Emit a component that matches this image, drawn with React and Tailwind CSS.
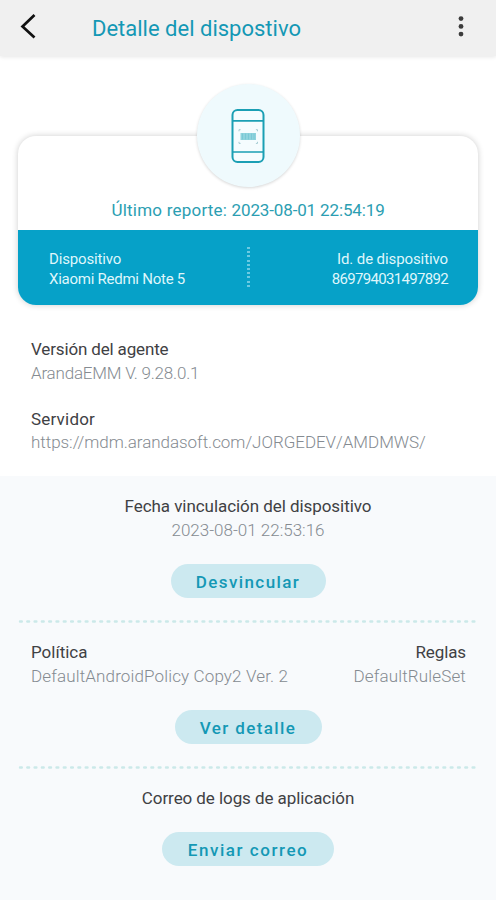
import { clsx } from "clsx";

function BackIcon() {
  return (
    <svg width="18" height="28" viewBox="0 0 18 28" fill="none">
      <path d="M15.5 1 3.5 12.4 15.5 23.6" stroke="#111" strokeWidth="2.7" />
    </svg>
  );
}

function MoreIcon() {
  return (
    <svg width="8" height="24" viewBox="0 0 8 24" fill="#3c3c3c">
      <circle cx="4" cy="4.6" r="2.4" />
      <circle cx="4" cy="12.4" r="2.4" />
      <circle cx="4" cy="20.1" r="2.4" />
    </svg>
  );
}

function PhoneIcon() {
  return (
    <svg width="36" height="56" viewBox="0 0 36 56" fill="none">
      <rect x="2.5" y="2" width="31" height="52" rx="5" fill="#f5fcfe" stroke="#1b9fb4" strokeWidth="2" />
      <path d="M2.5 12.8h31M2.5 44h31" stroke="#1b9fb4" strokeWidth="1.7" />
      <rect x="10.5" y="25" width="15.5" height="7" fill="#8fd3dd" />
      <path d="M12.5 25.5v6M15.5 25.5v6M18.5 25.5v6M21.5 25.5v6M24 25.5v6" stroke="#7ac8d5" strokeWidth="1" />
      <path d="M9 23.3v-1.6h1.6M25.9 21.7h1.6v1.6M9 33.8v1.6h1.6M25.9 35.4h1.6v-1.6" stroke="#a5ccd3" strokeWidth="1" />
    </svg>
  );
}

function Field({ label, value, className, labelClass, valueClass }) {
  return (
    <div className={clsx("text-[17px] leading-[23.5px] whitespace-nowrap", className)}>
      <div className={clsx("text-[#3f4144]", labelClass)}>{label}</div>
      <div className={clsx("font-light text-[#858b91]", valueClass)}>{value}</div>
    </div>
  );
}

function PillButton({ children, className }) {
  return (
    <button
      className={clsx(
        "mx-auto block h-[34px] rounded-full bg-[#cce9f0] pt-px text-[17px] leading-[34px] font-medium text-[#1498b5] whitespace-nowrap",
        className
      )}
    >
      {children}
    </button>
  );
}

function Divider() {
  return (
    <svg className="mx-auto block" width="460" height="3" viewBox="0 0 460 3">
      <path d="M2 1.5h457" stroke="#cbe9e9" strokeWidth="2.4" strokeLinecap="round" strokeDasharray="1.8 5.5" />
    </svg>
  );
}

export default function App() {
  return (
    <div className="flex h-[900px] w-[496px] flex-col overflow-hidden bg-white font-[Roboto,sans-serif]">
      {/* Top bar */}
      <header className="flex h-14 shrink-0 items-center bg-[#f0f0f0] pr-[31px] pl-[19px] shadow-[0_1px_4px_rgba(0,0,0,0.1)]">
        <BackIcon />
        <h1 className="ml-[55px] pt-0.5 text-[22px] leading-8 text-[#1498b5]">Detalle del dispostivo</h1>
        <div className="ml-auto -mt-1">
          <MoreIcon />
        </div>
      </header>

      {/* Device card */}
      <section className="mx-[18px] mt-20 h-[169px] shrink-0 rounded-[18px] bg-white shadow-[0_0_6px_rgba(0,0,0,0.2)]">
        <div className="flex h-[94px] flex-col items-center">
          <div className="-mt-[52px] flex size-[103px] shrink-0 items-center justify-center rounded-full bg-[#effafd] shadow-[0_1px_3px_rgba(0,0,0,0.16)]">
            <PhoneIcon />
          </div>
          <p className="mt-[11px] text-[17px] leading-6 whitespace-nowrap text-[#2b9eb2]">
            <span className="tracking-[0.22px]">Último reporte: </span>
            <span className="tracking-[-0.14px]">2023-08-01 22:54:19</span>
          </p>
        </div>
        <div className="flex h-[75px] items-start justify-between rounded-b-[18px] bg-[#06a1c8] px-[30px] pt-[19px] text-[15px] leading-5 text-[#dff6fb]">
          <div className="w-[170px] pl-px">
            <p className="tracking-[-0.15px]">Dispositivo</p>
            <p className="tracking-[-0.25px]">Xiaomi Redmi Note 5</p>
          </div>
          <div className="-mt-[2px] h-[42px] w-[3px] bg-[repeating-linear-gradient(180deg,#6ccae2_0_2px,transparent_2px_4.2px)]" />
          <div className="w-[170px] text-right">
            <p className="tracking-[-0.1px]">Id. de dispositivo</p>
            <p className="tracking-[-0.68px]">869794031497892</p>
          </div>
        </div>
      </section>

      <section className="flex flex-col gap-[22.5px] px-[31px] pt-[33px] pb-[21.5px]">
        <Field
          label="Versión del agente"
          labelClass="tracking-[-0.15px]"
          value="ArandaEMM V. 9.28.0.1"
          valueClass="tracking-[-0.2px]"
        />
        <Field
          label="Servidor"
          labelClass="tracking-[0.2px]"
          value="https://mdm.arandasoft.com/JORGEDEV/AMDMWS/"
          valueClass="tracking-[-0.04px]"
        />
      </section>

      <section className="grow bg-[#f8fafc] pt-[19px]">
        <Field
          className="text-center"
          label="Fecha vinculación del dispositivo"
          labelClass="tracking-[-0.06px]"
          value="2023-08-01 22:53:16"
        />
        <PillButton className="mt-[22px] w-[155px] tracking-[1.4px]">Desvincular</PillButton>
        <div className="h-[22px]" />
        <Divider />
        <div className="flex justify-between pt-[18px] pr-[30px] pl-[31px]">
          <Field label="Política" value="DefaultAndroidPolicy Copy2 Ver. 2" valueClass="tracking-[0.14px]" />
          <Field
            className="text-right"
            label="Reglas"
            labelClass="tracking-[-0.1px]"
            value="DefaultRuleSet"
            valueClass="tracking-[0.15px]"
          />
        </div>
        <PillButton className="mt-[22px] w-[147px] tracking-[1.4px]">Ver detalle</PillButton>
        <div className="h-[22px]" />
        <Divider />
        <p className="pt-[18px] text-center text-[17px] leading-[23.5px] tracking-[-0.07px] text-[#3f4144]">
          Correo de logs de aplicación
        </p>
        <PillButton className="mt-[21px] w-[172px] tracking-[1.55px]">Enviar correo</PillButton>
      </section>
    </div>
  );
}
